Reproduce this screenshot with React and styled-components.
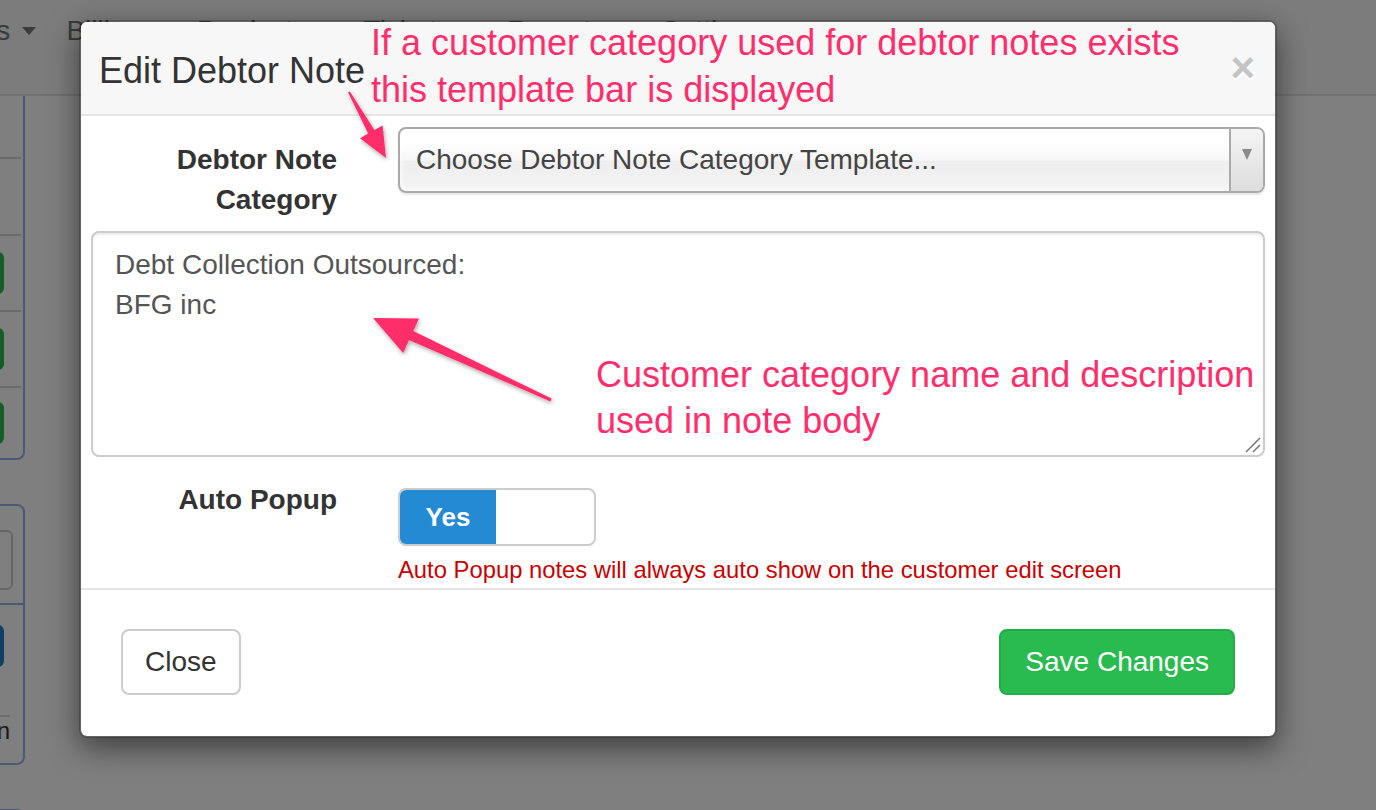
import React from 'react';
import styled, { createGlobalStyle } from 'styled-components';

const GlobalStyle = createGlobalStyle`
  html, body {
    margin: 0;
    padding: 0;
  }
  body {
    font-family: "Liberation Sans", Arial, sans-serif;
    background: #fff;
    overflow: hidden;
  }
  * {
    box-sizing: border-box;
  }
`;

const Page = styled.div`
  position: relative;
  width: 1376px;
  height: 810px;
  overflow: hidden;
  background: #fff;
`;

/* ---------- page behind the modal ---------- */

const Navbar = styled.nav`
  position: relative;
  z-index: 2;
  height: 96px;
  background: #f8f8f8;
  border-bottom: 2px solid #e2e2e2;
  display: flex;
  align-items: flex-start;
  padding-top: 11px;
  margin-left: -125px;
  gap: 30px;
`;

const NavItem = styled.div`
  display: flex;
  align-items: center;
  gap: 12px;
  font-size: 28px;
  line-height: 40px;
  color: #777;
  white-space: nowrap;
`;

const Caret = styled.span`
  width: 0;
  height: 0;
  border-top: 8px solid #777;
  border-left: 7px solid transparent;
  border-right: 7px solid transparent;
`;

const Content = styled.div`
  display: flex;
`;

const LeftColumn = styled.div`
  width: 300px;
  margin-left: -275px;
  display: flex;
  flex-direction: column;
`;

const Panel = styled.div`
  border: 2px solid #94b4f0;
  border-radius: ${p => (p.$top ? '0 0 8px 0' : '0 8px 8px 0')};
  margin-top: ${p => p.$offset}px;
  background: #fff;
`;

const PanelHead = styled.div`
  height: ${p => p.$h}px;
`;

const PanelRow = styled.div`
  height: ${p => p.$h}px;
  margin-right: 2px;
  border-top: 2px solid #d6d6d6;
  display: flex;
  align-items: center;
  justify-content: flex-end;
  padding-right: 17px;
`;

const PanelButton = styled.div`
  width: 80px;
  height: 42px;
  border-radius: 6px;
  background: ${p => p.$color};
  margin-right: ${p => p.$mr || 0}px;
`;

const PanelSection = styled.div`
  padding: ${p => p.$pad};
  border-top: ${p => (p.$divided ? '2px solid #94b4f0' : 'none')};
  display: flex;
  flex-direction: column;
  align-items: flex-end;
`;

const PanelInput = styled.div`
  width: 120px;
  height: 60px;
  border: 2px solid #ccc;
  border-radius: 6px;
`;

const PanelFoot = styled.div`
  align-self: stretch;
  margin-top: 48px;
  border-top: 2px solid #ddd;
  margin-right: 13px;
  font-size: 24px;
  line-height: 28px;
  color: #333;
  text-align: right;
`;

/* ---------- modal ---------- */

const Backdrop = styled.div`
  position: absolute;
  inset: 0;
  z-index: 5;
  background: rgba(0, 0, 0, 0.5);
`;

const ModalLayer = styled.div`
  position: absolute;
  inset: 0;
  z-index: 6;
  padding: 20px 0 0 79px;
`;

const Modal = styled.div`
  width: 1198px;
  background: #fff;
  border: 2px solid rgba(0, 0, 0, 0.2);
  border-radius: 8px;
  box-shadow: 0 10px 30px rgba(0, 0, 0, 0.5);
  overflow: hidden;
  background-clip: padding-box;
`;

const Header = styled.div`
  height: 94px;
  display: flex;
  align-items: center;
  justify-content: space-between;
  padding: 6px 20px 0 18px;
  background: #f7f7f7;
  border-bottom: 2px solid #e5e5e5;
`;

const Title = styled.h4`
  margin: 0;
  font-size: 36px;
  line-height: 40px;
  font-weight: 400;
  color: #333;
`;

const CloseX = styled.span`
  margin-top: -6px;
  font-size: 42px;
  line-height: 1;
  font-weight: 700;
  color: #c4c4c4;
  text-shadow: 0 2px 0 #fff;
`;

const Body = styled.div`
  padding: 11px 10px 4px;
`;

const FormRow = styled.div`
  display: grid;
  grid-template-columns: 246px 1fr;
  column-gap: 61px;
  margin-top: ${p => p.$mt || 0}px;
  margin-bottom: ${p => p.$mb || 0}px;
`;

const Label = styled.label`
  padding-top: 13px;
  text-align: right;
  font-size: 28px;
  line-height: 40px;
  font-weight: 700;
  color: #333;
`;

const ChosenSelect = styled.div`
  display: flex;
  height: 66px;
  border: 2px solid #aaa;
  border-radius: 8px;
  background: linear-gradient(#fff 20%, #f6f6f6 50%, #eee 52%, #f4f4f4 100%);
  box-shadow: inset 0 0 6px #fff, 0 2px 2px rgba(0, 0, 0, 0.1);
  overflow: hidden;
`;

const ChosenText = styled.span`
  flex: 1;
  display: flex;
  align-items: center;
  padding-left: 16px;
  font-size: 28px;
  color: #444;
`;

const ChosenArrow = styled.span`
  width: 34px;
  border-left: 2px solid #aaa;
  background: linear-gradient(#f4f4f4, #ddd);
  display: flex;
  justify-content: center;
  padding-top: 20px;

  &::after {
    content: '';
    width: 0;
    height: 0;
    border-top: 11px solid #8a8a8a;
    border-left: 5px solid transparent;
    border-right: 5px solid transparent;
  }
`;

const AreaWrap = styled.div`
  position: relative;
`;

const NoteArea = styled.textarea`
  display: block;
  width: 100%;
  height: 226px;
  border: 2px solid #ccc;
  border-radius: 8px;
  padding: 12px 22px;
  font-family: "Liberation Sans", Arial, sans-serif;
  font-size: 28px;
  line-height: 40px;
  color: #555;
  resize: none;
  outline: none;
  box-shadow: inset 0 2px 2px rgba(0, 0, 0, 0.075);
`;

const Grip = styled.svg`
  position: absolute;
  right: 3px;
  bottom: 3px;
`;

const Control = styled.div`
  padding-top: ${p => p.$pt || 0}px;
`;

const Toggle = styled.div`
  display: flex;
  width: 198px;
  height: 58px;
  border: 2px solid #ccc;
  border-radius: 8px;
  overflow: hidden;
  background: #fff;
`;

const ToggleOn = styled.span`
  width: 96px;
  display: flex;
  align-items: center;
  justify-content: center;
  background: #258ad4;
  color: #fff;
  font-size: 26px;
  font-weight: 700;
`;

const HelpText = styled.div`
  margin-top: 10px;
  font-size: 23.8px;
  line-height: 28px;
  color: #cc0000;
  white-space: nowrap;
`;

const Footer = styled.div`
  display: flex;
  justify-content: space-between;
  padding: 39px 40px 41px;
  border-top: 2px solid #e5e5e5;
`;

const Button = styled.button`
  height: 66px;
  padding: 0 ${p => (p.$primary ? 24 : 22)}px;
  border-radius: 8px;
  border: 2px solid ${p => (p.$primary ? '#21ae47' : '#ccc')};
  background: ${p => (p.$primary ? '#29bb4f' : '#fff')};
  color: ${p => (p.$primary ? '#fff' : '#333')};
  font-family: "Liberation Sans", Arial, sans-serif;
  font-size: 28px;
  cursor: pointer;
`;

/* ---------- screenshot annotations ---------- */

const Annotations = styled.div`
  position: absolute;
  inset: 0;
  z-index: 7;
  pointer-events: none;
`;

const Note = styled.div`
  position: absolute;
  left: ${p => p.$x}px;
  top: ${p => p.$y}px;
  font-size: 36px;
  line-height: ${p => p.$lh}px;
  color: #ff2d6b;
  white-space: nowrap;
`;

const ArrowLayer = styled.svg`
  position: absolute;
  left: 0;
  top: 0;
`;

export default function App() {
  return (
    <Page>
      <GlobalStyle />

      <Navbar>
        <NavItem>Customers<Caret /></NavItem>
        <NavItem>Billing<Caret /></NavItem>
        <NavItem>Products<Caret /></NavItem>
        <NavItem>Tickets<Caret /></NavItem>
        <NavItem>Reports<Caret /></NavItem>
        <NavItem>Settings</NavItem>
      </Navbar>

      <Content>
        <LeftColumn>
          <Panel $top $offset={-12}>
            <PanelHead $h={71} />
            <PanelRow $h={77} />
            <PanelRow $h={76}><PanelButton $color="#29bb4f" /></PanelRow>
            <PanelRow $h={76}><PanelButton $color="#29bb4f" /></PanelRow>
            <PanelRow $h={72}><PanelButton $color="#29bb4f" /></PanelRow>
          </Panel>
          <Panel $offset={44}>
            <PanelSection $pad="24px 10px 13px 0">
              <PanelInput />
            </PanelSection>
            <PanelSection $divided $pad="20px 0 18px 0">
              <PanelButton $color="#1e7fc8" $mr={19} />
              <PanelFoot>n</PanelFoot>
            </PanelSection>
          </Panel>
          <Panel $offset={44}>
            <PanelHead $h={60} />
          </Panel>
        </LeftColumn>
      </Content>

      <Backdrop />

      <ModalLayer>
        <Modal>
          <Header>
            <Title>Edit Debtor Note</Title>
            <CloseX>×</CloseX>
          </Header>

          <Body>
            <FormRow $mb={11}>
              <Label>Debtor Note Category</Label>
              <ChosenSelect>
                <ChosenText>Choose Debtor Note Category Template...</ChosenText>
                <ChosenArrow />
              </ChosenSelect>
            </FormRow>

            <AreaWrap>
              <NoteArea defaultValue={'Debt Collection Outsourced:\nBFG inc'} />
              <Grip width="18" height="18" viewBox="0 0 18 18">
                <path d="M16 2 L2 16 M16 9 L9 16" stroke="#777" strokeWidth="1.5" fill="none" />
              </Grip>
            </AreaWrap>

            <FormRow $mt={10}>
              <Label>Auto Popup</Label>
              <Control $pt={21}>
                <Toggle>
                  <ToggleOn>Yes</ToggleOn>
                </Toggle>
                <HelpText>Auto Popup notes will always auto show on the customer edit screen</HelpText>
              </Control>
            </FormRow>
          </Body>

          <Footer>
            <Button>Close</Button>
            <Button $primary>Save Changes</Button>
          </Footer>
        </Modal>
      </ModalLayer>

      <Annotations>
        <Note $x={371} $y={19} $lh={47}>
          If a customer category used for debtor notes exists
          <br />
          this template bar is displayed
        </Note>
        <Note $x={596} $y={352} $lh={46}>
          Customer category name and description
          <br />
          used in note body
        </Note>
        <ArrowLayer width="1376" height="810" viewBox="0 0 1376 810">
          <defs>
            <filter id="arrowShadow" x="-20%" y="-20%" width="140%" height="140%">
              <feDropShadow dx="1" dy="2" stdDeviation="2" floodColor="#000" floodOpacity="0.35" />
            </filter>
          </defs>
          <polygon
            filter="url(#arrowShadow)"
            fill="#ff2d6b"
            points="348.1,92.5 368.2,133.5 360,138.2 386,158 382.6,125.4 374.4,130.1 349.9,91.5"
          />
          <polygon
            filter="url(#arrowShadow)"
            fill="#ff2d6b"
            points="551.6,398.6 413.2,331.1 419,318.4 373,318 403.2,352.9 409,340.1 550.4,401.4"
          />
        </ArrowLayer>
      </Annotations>
    </Page>
  );
}
